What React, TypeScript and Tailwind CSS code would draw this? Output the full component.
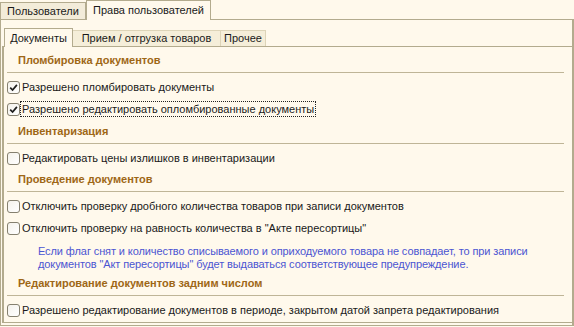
import React from "react";

const Check = ({ checked, label, focused }: { checked: boolean; label: string; focused?: boolean }) => (
  <div className="flex items-center h-[22px] pl-[3px]">
    <div className="w-[13px] h-[13px] rounded-[3px] border border-[#85806f] bg-gradient-to-br from-[#f4f2ec] to-white flex items-center justify-center shrink-0">
      {checked && (
        <svg width="9" height="9" viewBox="0 0 9 9">
          <path d="M1.2 4.6 L3.6 7 L7.9 1.9" stroke="#1e1e1e" strokeWidth="1.7" fill="none" />
        </svg>
      )}
    </div>
    <span
      className={
        "ml-[1px] px-[1px] leading-[14px] " +
        (focused ? "outline outline-1 outline-dotted outline-[#222]" : "")
      }
    >
      {label}
    </span>
  </div>
);

const Section = ({ title, top }: { title: string; top: string }) => (
  <div className={top}>
    <div className="pl-[14px] h-[14px] leading-[14px] font-bold text-[#9e6716]">{title}</div>
    <div className="ml-[3px] mr-[8px] mt-[5px] mb-[3px] border-t border-[#bfb597]" />
  </div>
);

export default function App() {
  return (
    <div
      className="w-[574px] h-[327px] bg-[#fff9ec] text-[11px] text-[#1a1a1a] overflow-hidden"
      style={{ fontFamily: '"Liberation Sans", Arial, sans-serif' }}
    >
      <div className="flex items-end h-[19px]">
        <div className="w-[86px] h-[17px] leading-[16px] text-center bg-[#f3ecd9] border border-b-0 border-[#b3ab8e]">
          Пользователи
        </div>
        <div className="w-[125px] h-[20px] leading-[18px] text-center border border-b-0 border-[#b3ab8e] bg-[#fff9ec] -mb-[1px] relative">
          Права пользователей
        </div>
      </div>
      <div className="h-[307px] border border-r-2 border-[#b3ab8e] pt-[8px] pl-[1px] pb-[2px]">
        <div className="flex items-end h-[18px] pl-[2px]">
          <div className="w-[69px] h-[19px] leading-[18px] text-center border border-b-0 border-[#b3ab8e] bg-[#fff9ec] -mb-[1px] relative">
            Документы
          </div>
          <div className="w-[148px] h-[16px] leading-[15px] text-center bg-[#f5eed9] border-t border-r border-[#ddd4b8]">
            Прием / отгрузка товаров
          </div>
          <div className="w-[45px] h-[16px] leading-[15px] text-center bg-[#f5eed9] border-t border-r border-[#ddd4b8]">
            Прочее
          </div>
        </div>
        <div className="h-[277px] border-l-2 border-t border-b border-[#b3ab8e]">
          <Section title="Пломбировка документов" top="pt-[6px]" />
          <Check checked label="Разрешено пломбировать документы" />
          <Check checked focused label="Разрешено редактировать опломбированные документы" />
          <Section title="Инвентаризация" top="pt-[4px]" />
          <Check checked={false} label="Редактировать цены излишков в инвентаризации" />
          <Section title="Проведение документов" top="pt-[3px]" />
          <Check checked={false} label="Отключить проверку дробного количества товаров при записи документов" />
          <Check checked={false} label={'Отключить проверку на равность количества в "Акте пересортицы"'} />
          <div className="pl-[34px] pt-[6px] text-[#4b55d2] leading-[13px] whitespace-nowrap tracking-[-0.1px]">
            Если флаг снят и количество списываемого и оприходуемого товара не совпадает, то при записи
            <br />
            документов "Акт пересортицы" будет выдаваться соответствующее предупреждение.
          </div>
          <Section title="Редактирование документов задним числом" top="pt-[5px]" />
          <Check checked={false} label="Разрешено редактирование документов в периоде, закрытом датой запрета редактирования" />
        </div>
      </div>
    </div>
  );
}
